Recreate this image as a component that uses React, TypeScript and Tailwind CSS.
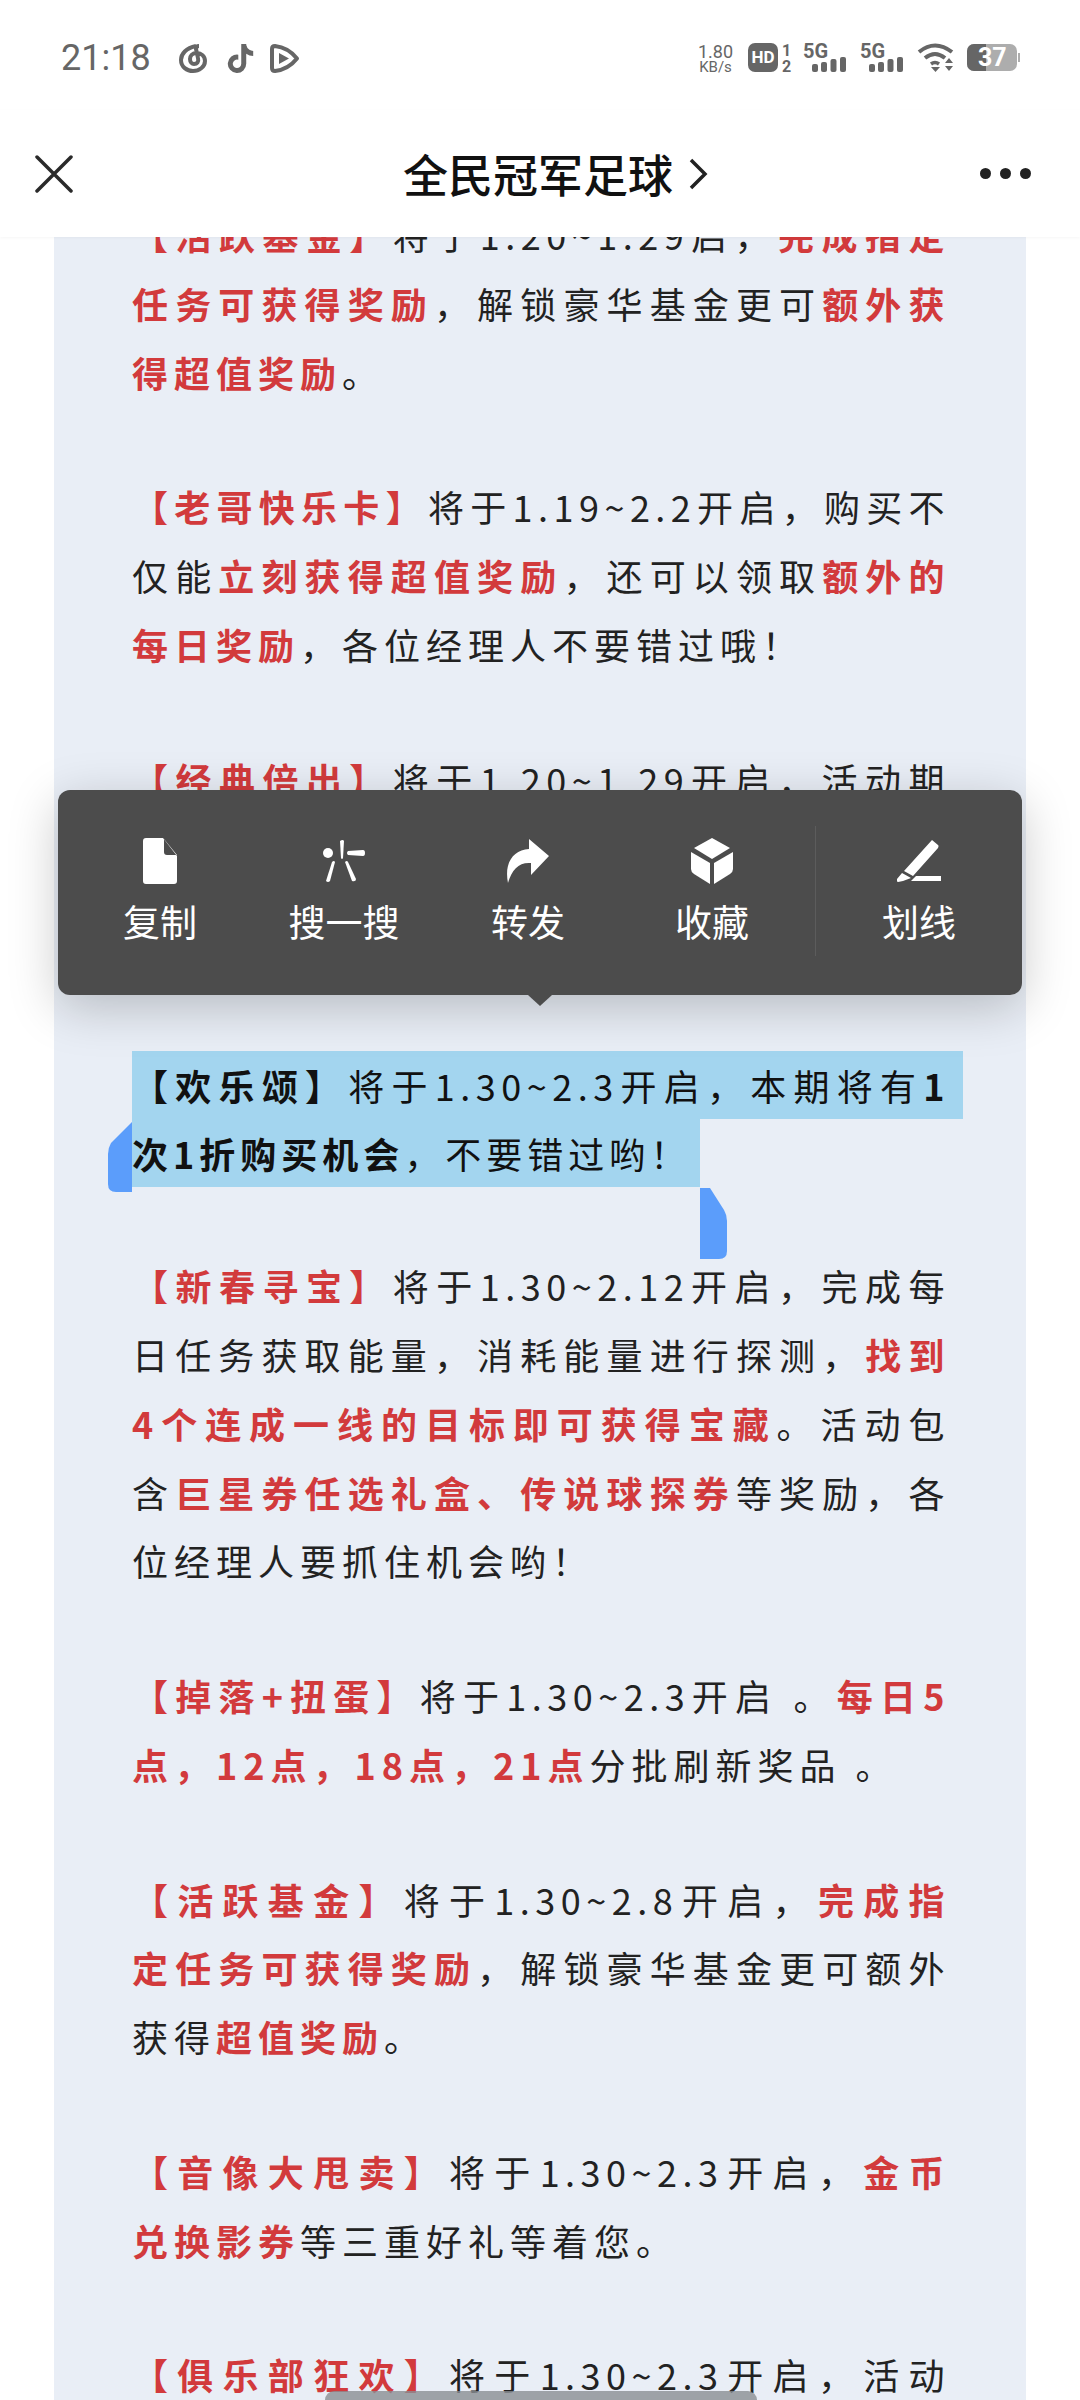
import React from 'react';
import { FaTiktok } from 'react-icons/fa6';

// Article lines are broken by hand; text between asterisks is the red highlight.
const before: string[][] = [
  [
    '*【活跃基金】*将于1.20~1.29启，*完成指定*',
    '*任务可获得奖励*，解锁豪华基金更可*额外获*',
    '*得超值奖励*。',
  ],
  [
    '*【老哥快乐卡】*将于1.19~2.2开启，购买不',
    '仅能*立刻获得超值奖励*，还可以领取*额外的*',
    '*每日奖励*，各位经理人不要错过哦！',
  ],
];

const after: string[][] = [
  [
    '*【新春寻宝】*将于1.30~2.12开启，完成每',
    '日任务获取能量，消耗能量进行探测，*找到*',
    '*4个连成一线的目标即可获得宝藏*。活动包',
    '含*巨星券任选礼盒、传说球探券*等奖励，各',
    '位经理人要抓住机会哟！',
  ],
  [
    '*【掉落+扭蛋】*将于1.30~2.3开启 。*每日5*',
    '*点，12点，18点，21点*分批刷新奖品 。',
  ],
  [
    '*【活跃基金】*将于1.30~2.8开启，*完成指*',
    '*定任务可获得奖励*，解锁豪华基金更可额外',
    '获得*超值奖励*。',
  ],
  [
    '*【音像大甩卖】*将于1.30~2.3开启，*金币*',
    '*兑换影券*等三重好礼等着您。',
  ],
  ['*【俱乐部狂欢】*将于1.30~2.3开启，活动'],
];

const Line: React.FC<{ text: string; justify: boolean }> = ({ text, justify }) => (
  <div
    className={
      justify
        ? 'h-[68.75px] text-justify tracking-[5.5px] [text-align-last:justify]'
        : 'h-[68.75px] whitespace-nowrap'
    }
  >
    {text.split('*').map((part, i) =>
      i % 2 === 1 ? (
        <span key={i} className="font-bold text-[#d23a3c]">
          {part}
        </span>
      ) : (
        <span key={i}>{part}</span>
      )
    )}
  </div>
);

const Paragraph: React.FC<{ lines: string[]; open?: boolean }> = ({ lines, open }) => (
  <div>
    {lines.map((text, i) => (
      <Line key={i} text={text} justify={open || i < lines.length - 1} />
    ))}
  </div>
);

const menuItems: { label: string; icon: React.ReactNode }[] = [
  {
    label: '复制',
    icon: (
      <svg width="34" height="46" viewBox="0 0 34 46" fill="white">
        <path d="M3 0h17l14 18v25a3 3 0 0 1-3 3H3a3 3 0 0 1-3-3V3a3 3 0 0 1 3-3zM21 1v13a3 3 0 0 0 3 3h10z" fillRule="evenodd" />
      </svg>
    ),
  },
  {
    label: '搜一搜',
    icon: (
      <svg width="42" height="42" viewBox="0 0 42 42" fill="white">
        <path d="M17 1q3-2 4 0l-1 17q-1 2-2 0z" />
        <path d="M25 11l15-1q2 0 2 3t-2 3l-15-1q-2-2 0-4z" />
        <path d="M9 22q2-2 3 0L7 41q-2 2-4 0z" />
        <path d="M22 22q2-2 3 0l8 17q0 3-4 2z" />
        <circle cx="5" cy="13" r="5" />
      </svg>
    ),
  },
  {
    label: '转发',
    icon: (
      <svg width="42" height="44" viewBox="0 0 42 44" fill="white">
        <path d="M22 0l20 17-18 19V24C12 23 5 30 1 44-3 24 6 11 22 10z" />
      </svg>
    ),
  },
  {
    label: '收藏',
    icon: (
      <svg width="42" height="46" viewBox="0 0 42 46" fill="white">
        <path d="M21 0l18 10-18 11L3 10z" />
        <path d="M0 14l19 11v21L3 36q-3-2-3-5z" />
        <path d="M42 14L23 25v21l16-10q3-2 3-5z" />
      </svg>
    ),
  },
];

const Signal: React.FC = () => (
  <div className="relative h-[29px] w-[43px] font-['Roboto',sans-serif] text-[20px] font-bold leading-[16px]">
    <span className="absolute left-0 top-0">5G</span>
    <svg className="absolute bottom-0 right-0" width="34" height="15" viewBox="0 0 34 15" fill="#666">
      <rect x="0" y="7" width="6" height="8" rx="2" />
      <rect x="9" y="5" width="6" height="10" rx="2" />
      <rect x="18.500" y="2" width="6" height="13" rx="2" />
      <rect x="28" y="0" width="6" height="15" rx="2" />
    </svg>
  </div>
);

const StatusIcons: React.FC = () => (
  <div className="flex items-start text-[#666]">
    <div className="flex w-[37px] flex-col items-center font-['Roboto',sans-serif] leading-none">
      <span className="h-[17px] text-[18px]">1.80</span>
      <span className="text-[15px]">KB/s</span>
    </div>
    <div className="ml-[14px] flex h-[29px] w-[30px] items-center justify-center rounded-[7px] bg-[#666] font-['Roboto',sans-serif] text-[17px] font-bold text-white">
      HD
    </div>
    <div className="ml-[4px] flex w-[9px] flex-col items-center font-['Roboto',sans-serif] text-[16px] font-bold leading-[16px]">
      <span>1</span>
      <span>2</span>
    </div>
    <div className="ml-[12px]">
      <Signal />
    </div>
    <div className="ml-[14px]">
      <Signal />
    </div>
    <svg className="ml-[14px]" width="38" height="29" viewBox="0 0 38 29" fill="none" stroke="#666">
      <path d="M2 9Q18-4 35 9" strokeWidth="4" />
      <path d="M8 15q10-8 20 0" strokeWidth="4" />
      <path d="M14 21q4-3 8 0" strokeWidth="3.500" />
      <path d="M14 24h9l-4.500 5z" fill="#666" stroke="none" />
      <path d="M28 20l4-5 4 5zM28 23h8l-4 5z" fill="#666" stroke="none" />
    </svg>
    <div className="relative ml-[12px] mt-[1px] flex h-[27px] w-[50px] overflow-hidden rounded-[7px] bg-[#adadad]">
      <div className="h-full w-[19px] bg-[#666]" />
      <span className="absolute left-[11px] top-0 font-['Roboto',sans-serif] text-[25px] font-bold leading-[27px] text-white">
        37
      </span>
    </div>
    <div className="ml-[1px] mt-[10px] h-[9px] w-[2px] bg-[#adadad]" />
  </div>
);

const App: React.FC = () => {
  return (
    <div className="relative h-[2400px] w-[1080px] overflow-hidden bg-white font-['Noto_Sans_CJK_SC','Noto_Sans',sans-serif]">
      {/* Status bar */}
      <div className="relative z-20 flex h-[110px] items-start justify-between bg-white pl-[61px] pr-[60px] pt-[43px]">
        <div className="flex items-center text-[#666]">
          <span className="font-['Roboto',sans-serif] text-[36px] leading-[30px]">21:18</span>
          <svg className="ml-[28px]" width="29" height="29" viewBox="0 0 29 29" fill="none" stroke="#666" strokeWidth="4">
            <path d="M17 2C7 4 2 10 2 16c0 7 6 11 12 11s12-4 12-10c0-5-4-8-8-8-5 0-7 3-7 6 0 3 2 5 4 5 3 0 5-2 4-6l-2-9q0-3 3-3" />
          </svg>
          <FaTiktok className="ml-[18px] text-[29px]" />
          <svg className="ml-[15px]" width="30" height="29" viewBox="0 0 30 29" fill="none" stroke="#666" strokeWidth="4" strokeLinejoin="round">
            <path d="M5 2q-3 0-3 3v19q0 3 3 3c9-1 16-5 22-12.500C21 7 14 3 5 2z" />
            <path d="M9 9l10 5.500L9 20z" fill="#666" stroke="none" />
          </svg>
        </div>
        <StatusIcons />
      </div>

      {/* Title bar */}
      <div className="relative z-20 flex h-[127px] items-center justify-between bg-white pl-[35px] pr-[49px] shadow-[0_1px_3px_rgba(0,0,0,0.04)]">
        <svg width="38" height="38" viewBox="0 0 38 38" stroke="#2a2a2a" strokeWidth="3.500" strokeLinecap="round">
          <path d="M2 2l34 34M36 2L2 36" />
        </svg>
        <div className="absolute left-[403px] top-0 flex h-full items-center">
          <span className="text-[45px] font-medium leading-none text-[#111]">全民冠军足球</span>
          <svg className="ml-[15px]" width="20" height="32" viewBox="0 0 20 32" fill="none" stroke="#222" strokeWidth="3.500">
            <path d="M3 2l14 14L3 30" />
          </svg>
        </div>
        <div className="flex gap-[9px]">
          <span className="h-[11px] w-[11px] rounded-full bg-[#222]" />
          <span className="h-[11px] w-[11px] rounded-full bg-[#222]" />
          <span className="h-[11px] w-[11px] rounded-full bg-[#222]" />
        </div>
      </div>

      {/* Article body, scrolled so the first line sits under the title bar */}
      <div className="mx-[54px] -mt-[37px] flex h-[2200px] flex-col gap-[66px] bg-[#e9eef6] pl-[78px] pr-[76px] text-[36px] leading-[68.75px] tracking-[6px] text-[#222]">
        {before.map((lines, i) => (
          <Paragraph key={i} lines={lines} />
        ))}
        <div className="mb-[172px]">
          <Line text="*【经典倍出】*将于1.20~1.29开启，活动期" justify />
        </div>

        {/* Selected paragraph */}
        <div className="-mb-[2px] text-[#111]">
          <div className="h-[68px] w-[831px] bg-[#a3d5ef] pr-[13px] text-justify leading-[68px] tracking-[5.5px] [text-align-last:justify]">
            <span className="font-bold">【欢乐颂】</span>将于1.30~2.3开启，本期将有<span className="font-bold">1</span>
          </div>
          <div className="h-[68px] w-[568px] whitespace-nowrap bg-[#a3d5ef] leading-[68px] tracking-[5px]">
            <span className="font-bold">次1折购买机会</span>，不要错过哟！
          </div>
        </div>

        {after.map((lines, i) => (
          <Paragraph key={i} lines={lines} open={i === after.length - 1} />
        ))}
      </div>

      {/* Selection handles */}
      <svg className="absolute left-[108px] top-[1122px]" width="24" height="70" viewBox="0 0 24 70" fill="#5b9dfb">
        <path d="M24 0v70H8q-8 0-8-8V32q0-6 3-11z" />
      </svg>
      <svg className="absolute left-[700px] top-[1188px]" width="27" height="71" viewBox="0 0 27 71" fill="#5b9dfb">
        <path d="M0 0v71h19q8 0 8-8V33q0-6-3-11L10 0z" />
      </svg>

      {/* Text action menu */}
      <div className="absolute left-[58px] top-[790px] z-10 flex h-[205px] w-[964px] rounded-[12px] bg-[#4c4c4c] pl-[10px] shadow-[0_12px_50px_rgba(0,0,0,0.22)]">
        {menuItems.map((item) => (
          <div key={item.label} className="flex w-[184px] flex-col items-center pt-[47px]">
            <div className="flex h-[48px] items-center">{item.icon}</div>
            <span className="mt-[10px] text-[37px] leading-[52px] text-white">{item.label}</span>
          </div>
        ))}
        <div className="ml-[11px] mt-[36px] h-[130px] w-px bg-[#5c5c5c]" />
        <div className="flex flex-1 flex-col items-center pt-[47px]">
          <div className="flex h-[48px] items-center">
            <svg width="44" height="42" viewBox="0 0 44 42" fill="white">
              <path d="M35 0l6 5q1 1 0 3L16 36l-9-5zM5 33l9 5-8 3-5 1q-2-1-1-3z" />
              <path d="M19 36h25v5H14z" />
            </svg>
          </div>
          <span className="mt-[10px] text-[37px] leading-[52px] text-white">划线</span>
        </div>
        <div className="absolute left-[470px] top-[205px] h-0 w-0 border-x-[12px] border-t-[11px] border-x-transparent border-t-[#4c4c4c]" />
      </div>

      {/* Home indicator */}
      <div className="absolute bottom-0 left-[325px] h-[9px] w-[432px] rounded-t-full bg-[#8a8e94]/80" />
    </div>
  );
};

export default App;
